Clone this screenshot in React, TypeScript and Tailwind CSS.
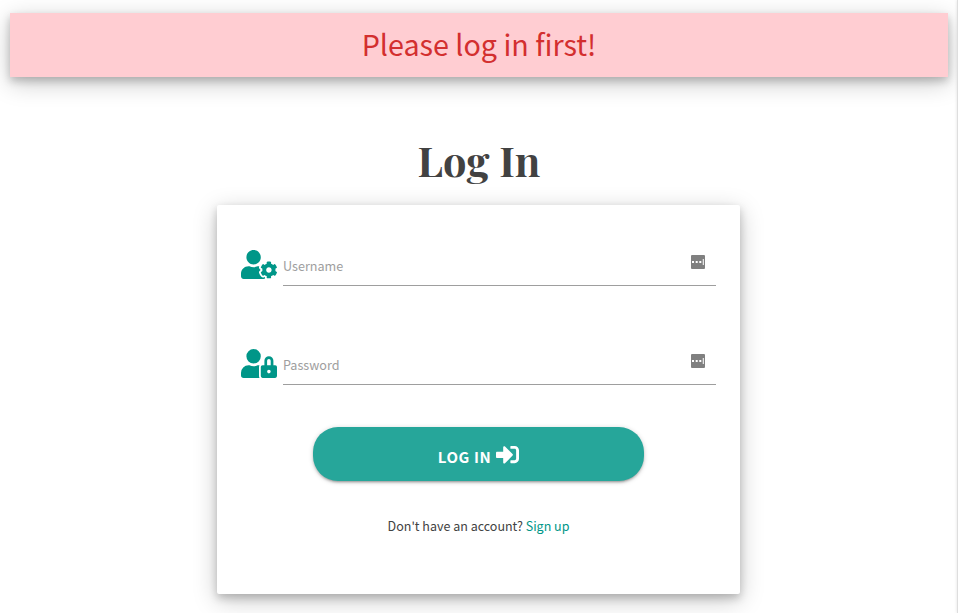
import React from "react";
import { FaSignInAlt, FaUserCog, FaUserLock } from "react-icons/fa";

const panelShadow =
  "shadow-[0_4px_8px_0_rgba(0,0,0,0.2),0_6px_24px_0_rgba(0,0,0,0.22)]";

function AutofillBadge() {
  return (
    <svg width="14" height="14" viewBox="0 0 14 14" className="mb-4 mr-[11px] shrink-0">
      <rect width="14" height="14" rx="1" fill="#808080" />
      <path d="M1 6h2v2H1zM4.7 6h2v2h-2zM8.3 6h2v2h-2z" fill="#fff" />
      <path d="M11.7 4h1.3v6h-1.3z" fill="#e4e4e4" />
    </svg>
  );
}

function Field({ label, icon }: { label: string; icon: React.ReactNode }) {
  return (
    <div className="flex h-[46px] items-start">
      <div className="w-[42px] shrink-0 pt-[10px] text-[#009688]">{icon}</div>
      <label className="flex h-full flex-1 items-end justify-between border-b border-[#9e9e9e] text-[#9e9e9e]">
        <span className="mb-[9px] text-[12.6px] leading-5">{label}</span>
        <AutofillBadge />
      </label>
    </div>
  );
}

export default function App() {
  return (
    <div className="flex h-[613px] w-full overflow-hidden bg-white font-['Noto_Sans_CJK_SC',sans-serif]">
      <main className="flex flex-1 flex-col items-center pl-[10px] pr-[9px] pt-[13px]">
        <div className={`flex h-16 w-full items-center justify-center bg-[#ffcdd2] pb-[2px] text-[28.7px] text-[#d32f2f] ${panelShadow}`}>
          Please log in first!
        </div>
        <h1 className="mt-[58px] flex h-[50px] items-center whitespace-pre font-['Playfair_Display','Liberation_Serif',serif] text-[41.6px] font-bold leading-none text-[#424242]">
          Log In
        </h1>
        <section className={`mr-px mt-5 flex h-[389px] w-[523px] flex-col rounded-[2px] bg-white px-6 pt-[35px] ${panelShadow}`}>
          <Field label="Username" icon={<FaUserCog className="h-[29px] w-9" />} />
          <div className="h-[53px]" />
          <Field label="Password" icon={<FaUserLock className="h-[29px] w-9" />} />
          <button className="mt-[42px] flex h-[54px] w-[331px] items-center justify-center gap-[5px] self-center rounded-[25px] bg-[#26a69a] text-[15px] font-bold tracking-[0.6px] text-white shadow-[0_2px_2px_0_rgba(0,0,0,0.14),0_3px_1px_-2px_rgba(0,0,0,0.12),0_1px_5px_0_rgba(0,0,0,0.2)]">
            <span className="pt-[6px]">LOG IN</span>
            <FaSignInAlt className="h-[23px] w-[23px]" />
          </button>
          <p className="mt-[35px] text-center text-[12.5px] leading-5 text-[#424242]">
            Don't have an account? <a className="text-[#009688]">Sign up</a>
          </p>
        </section>
      </main>
      <div className="w-px bg-[#dedede] shadow-[0_0_3px_rgba(0,0,0,0.2)]" />
    </div>
  );
}
